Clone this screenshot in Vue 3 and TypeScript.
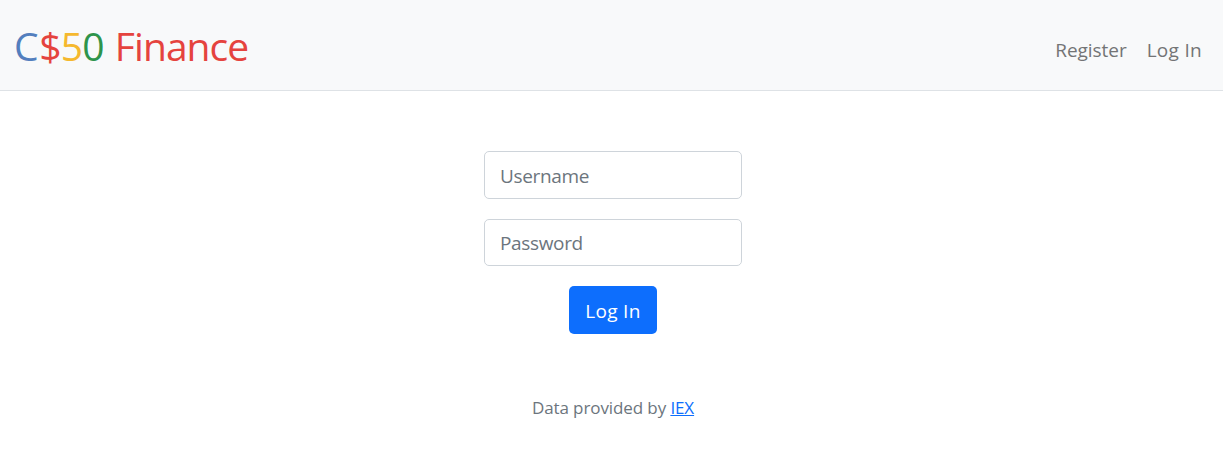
<script setup lang="ts">
import { ref } from 'vue'

const username = ref('')
const password = ref('')
</script>

<template>
  <div class="page">
    <nav class="navbar">
      <a class="brand"><span class="blue">C</span><span class="red">$</span><span class="yellow">5</span><span class="green">0</span> <span class="red word">Finance</span></a>
      <div class="links"><a class="register">Register</a><a class="login">Log In</a></div>
    </nav>
    <main>
      <form @submit.prevent>
        <input v-model="username" type="text" placeholder="Username" />
        <input v-model="password" type="password" placeholder="Password" />
        <button type="submit"><span>Log In</span></button>
      </form>
    </main>
    <footer>Data provided by <a>IEX</a></footer>
  </div>
</template>

<style>
body { margin: 0; background: #fff; }
</style>

<style scoped>
* { box-sizing: border-box; }
.page { height: 467px; overflow: hidden; font-family: "Open Sans", "Noto Sans", sans-serif; font-size: 19px; letter-spacing: -0.35px; color: #212529; }
.navbar { height: 91px; padding: 0 21px 0 14px; display: flex; align-items: center; justify-content: space-between; background: #f8f9fa; border-bottom: 1px solid #dee2e6; }
.brand { font-size: 39px; line-height: 57px; white-space: pre; font-weight: 400; letter-spacing: -0.85px; }
.blue { color: #537fbe; margin-right: 1.5px; }
.word { margin-left: 2px; letter-spacing: -0.95px; }
.red { color: #e5433e; }
.yellow { color: #f5b82e; }
.green { color: #2e944b; }
.links { display: flex; gap: 20px; padding-top: 10px; color: #737475; }
.register { letter-spacing: -0.05px; }
.login { letter-spacing: 0.3px; }
main { padding-top: 60px; }
form { display: flex; flex-direction: column; align-items: center; gap: 20px; padding-left: 3px; }
input { width: 258px; height: 48px; margin: 0; padding: 2px 15px 0; border: 1px solid #ced4da; border-radius: 5px; font: inherit; letter-spacing: inherit; background: #fff; outline: 0; }
input + input { height: 47px; padding-top: 0; }
input::placeholder { color: #6c757d; opacity: 1; }
button { width: 88px; height: 48px; padding: 2px 0 0; border: 0; border-radius: 5px; background: #0d6efd; color: #fff; font: inherit; letter-spacing: 0.3px; }
footer { margin-top: 60px; padding-left: 3px; text-align: center; font-size: 17px; letter-spacing: -0.1px; line-height: 28px; color: #6c757d; }
footer a { color: #0d6efd; text-decoration: underline; }
</style>
